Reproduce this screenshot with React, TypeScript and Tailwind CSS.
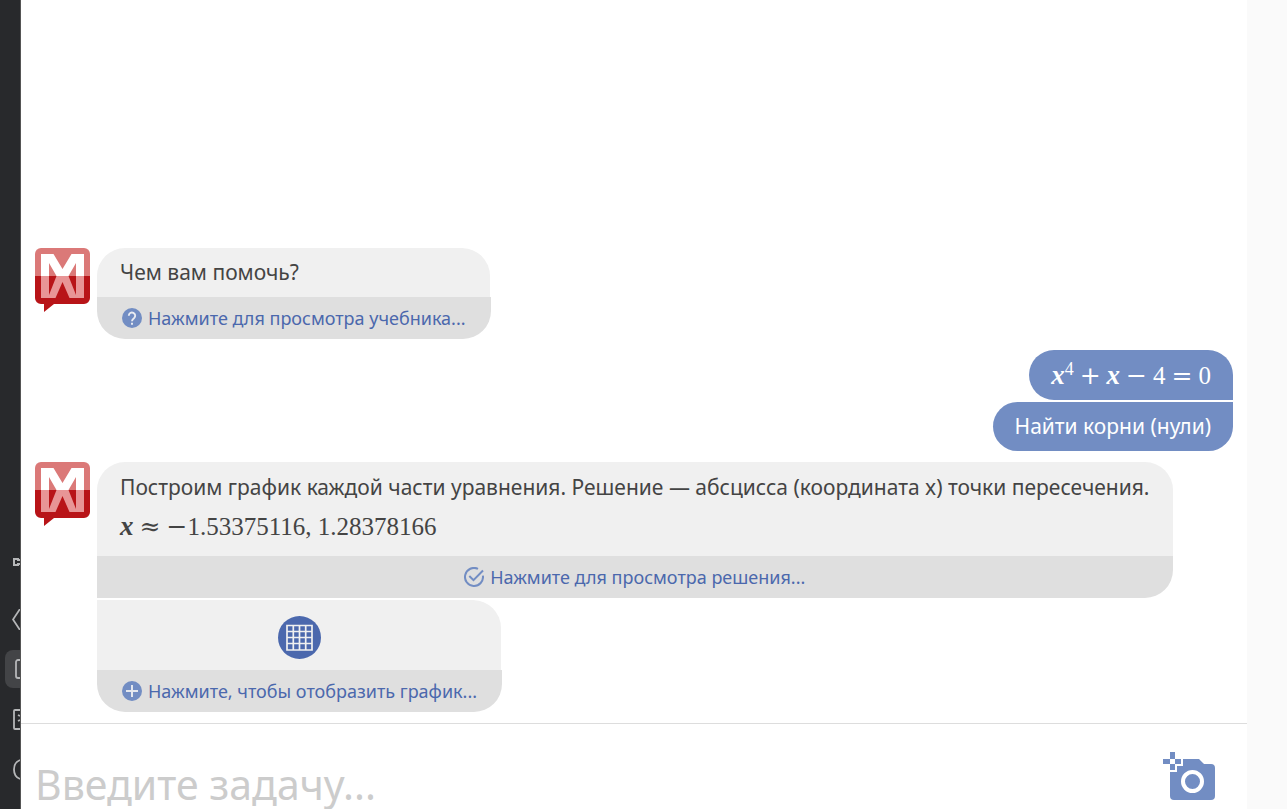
import type { ReactNode } from "react";

function MathX() {
  return <span className="text-[27px] font-bold italic">x</span>;
}

function Operator({ children }: { children: ReactNode }) {
  return <span className="font-['DejaVu_Serif',serif] text-[25px]">{children}</span>;
}

function Logo() {
  return (
    <svg className="h-16 w-[55px] shrink-0" viewBox="0 0 55 64" role="img" aria-label="Mathway">
      <path d="M0 28h55v22a6 6 0 0 1-6 6H19l-10 8v-8H6a6 6 0 0 1-6-6z" fill="#b81418" />
      <path d="M6 0h43a6 6 0 0 1 6 6v22H0V6a6 6 0 0 1 6-6z" fill="#db7978" />
      <path d="M6 28h43v22H6z" fill="#e89596" />
      <path d="M6 28V6h12.500l9 15L36.500 6H49v22h-8V15l-7.500 13h-12L14 15v13z" fill="#fff" />
      <path d="M14 28v19l7.500-19zM41 28v19l-7.500-19zM27.500 34L20.500 50h14z" fill="#b81418" />
    </svg>
  );
}

function HelpIcon() {
  return (
    <svg className="size-5 shrink-0" viewBox="0 0 20 20" aria-hidden="true">
      <circle cx="10" cy="10" r="10" fill="#728dc3" />
      <path d="M6.800 7.700a3.200 3.200 0 1 1 5.300 2.400c-1.200 1-2.100 1.500-2.100 3.100" fill="none" stroke="#e8ebf2" strokeWidth="1.900" />
      <path d="M9 14.800h2v2H9z" fill="#e8ebf2" />
    </svg>
  );
}

function CheckIcon() {
  return (
    <svg className="size-5 shrink-0" viewBox="0 0 20 20" fill="none" stroke="#728dc3" strokeWidth="2" aria-hidden="true">
      <path d="M18.900 8.600A9 9 0 1 1 14 1.900M5.300 9l4.200 4.200L19 3.500" />
    </svg>
  );
}

function PlusIcon() {
  return (
    <svg className="size-5 shrink-0" viewBox="0 0 20 20" aria-hidden="true">
      <circle cx="10" cy="10" r="10" fill="#728dc3" />
      <path d="M10 4v12M4 10h12" stroke="#e4e7ee" strokeWidth="2" />
    </svg>
  );
}

function GraphIcon() {
  return (
    <svg className="size-[43px]" viewBox="0 0 43 43" aria-hidden="true">
      <circle cx="21.500" cy="21.500" r="21.500" fill="#4b68ad" />
      <path d="M9 9.500h25v24.500H9zM15.300 9v25M21.500 9v25M27.700 9v25M9 15.500h25M9 21.500h25M9 27.500h25" fill="none" stroke="#f0f0f0" strokeWidth="1.700" />
    </svg>
  );
}

function CameraIcon() {
  return (
    <svg className="h-12 w-[52px]" viewBox="0 0 52 48" aria-hidden="true">
      <path d="M20 7h16l5 5h7a4 4 0 0 1 4 4v28a4 4 0 0 1-4 4H11a4 4 0 0 1-4-4V20h7v-6h6z" fill="#728dc3" />
      <circle cx="29.500" cy="29.500" r="9.500" fill="none" stroke="#fff" strokeWidth="4" />
      <path d="M7 0h5v7H7zM7 12h5v6H7zM0 7h7v5H0zM12 7h6v5h-6z" fill="#728dc3" />
    </svg>
  );
}

function Rail() {
  return (
    <nav aria-label="Tools" className="flex w-[21px] shrink-0 flex-col items-end justify-end overflow-hidden border-r border-[#555] bg-[#28292c] text-[#b5b6b8]">
      <button aria-label="Panel" className="mb-[43px] h-2 w-[7px]">
        <svg className="h-2 w-[7px]" viewBox="0 0 7 8" fill="none" stroke="currentColor" strokeWidth="2"><path d="M7 2H5V1H1v6h4V6h2" /></svg>
      </button>
      <button aria-label="Code" className="mb-5 h-[21px] w-2">
        <svg className="h-[21px] w-2" viewBox="0 0 8 21" fill="none" stroke="currentColor" strokeWidth="1.800"><path d="M8 0L1 10.500 8 21" /></svg>
      </button>
      <button aria-label="Device" className="mb-[21px] flex h-[38px] w-[15px] items-center justify-end rounded-l-lg bg-[#434447]">
        <svg className="h-5 w-[5px]" viewBox="0 0 5 20" fill="none" stroke="currentColor" strokeWidth="1.800"><path d="M5 1H3a2 2 0 0 0-2 2v14a2 2 0 0 0 2 2h2" /></svg>
      </button>
      <button aria-label="Terminal" className="mb-[29px] h-[21px] w-[7px]">
        <svg className="h-[21px] w-[7px]" viewBox="0 0 7 21" fill="none" stroke="currentColor" strokeWidth="1.800"><path d="M7 1H2a1 1 0 0 0-1 1v17a1 1 0 0 0 1 1h5M5 6l2 1M5 12l2-1" /></svg>
      </button>
      <button aria-label="History" className="mb-[29px] h-[21px] w-[7px]">
        <svg className="h-[21px] w-[7px]" viewBox="0 0 7 21" fill="none" stroke="currentColor" strokeWidth="1.800"><path d="M7 1C-1 4-1 17 7 20" /></svg>
      </button>
    </nav>
  );
}

function BubbleAction({ icon, children }: { icon: ReactNode; children: ReactNode }) {
  return (
    <button className="flex h-[42px] w-full items-center justify-center gap-[6px] bg-[#dfdfdf] px-[25px] text-[18px] whitespace-nowrap text-[#4b68ad]">
      {icon}
      <span>{children}</span>
    </button>
  );
}

export default function App() {
  return (
    <div className="flex h-screen overflow-hidden bg-[#fafafa] font-['Noto_Sans',sans-serif] text-[#444]">
      <Rail />
      <main className="mr-10 flex min-w-0 flex-1 flex-col bg-white">
        <section aria-label="Chat" className="flex min-h-0 flex-1 flex-col justify-end px-[14px] pb-[11px]">
          <div className="flex gap-[7px]">
            <Logo />
            <div className="overflow-hidden rounded-[28px]">
              <p className="mr-px flex h-[49px] items-center rounded-tr-[28px] bg-[#f0f0f0] px-[23px] text-[21px]">Чем вам помочь?</p>
              <BubbleAction icon={<HelpIcon />}>Нажмите для просмотра учебника...</BubbleAction>
            </div>
          </div>

          <div className="mt-[11px] mb-[11px] flex flex-col items-end gap-[2px] text-white">
            <p className="flex h-[50px] items-baseline gap-[6px] rounded-[25px] rounded-br-none bg-[#728dc3] px-[22px] font-['Liberation_Serif',serif] text-[25px] leading-[50px]">
              <span><MathX /><sup className="text-[18px]">4</sup></span>
              <Operator>+</Operator>
              <MathX />
              <Operator>−</Operator>
              <span>4</span>
              <Operator>=</Operator>
              <span>0</span>
            </p>
            <p className="flex h-[49px] items-center rounded-[25px] rounded-tr-none bg-[#728dc3] px-[22px] text-[21px]">Найти корни (нули)</p>
          </div>

          <div className="flex gap-[7px]">
            <Logo />
            <div className="flex min-w-0 flex-col items-start gap-[2px]">
              <div className="overflow-hidden rounded-[28px] rounded-bl-none">
                <div className="h-[94px] bg-[#f0f0f0] px-[23px] pt-[9px]">
                  <p className="text-[21px] leading-8 whitespace-nowrap">Построим график каждой части уравнения. Решение — абсцисса (координата x) точки пересечения.</p>
                  <p className="flex h-10 items-baseline gap-[6px] font-['Liberation_Serif',serif] text-[25px] leading-[46px]">
                    <MathX />
                    <Operator>≈</Operator>
                    <span><Operator>−</Operator>1.53375116, 1.28378166</span>
                  </p>
                </div>
                <BubbleAction icon={<CheckIcon />}>Нажмите для просмотра решения...</BubbleAction>
              </div>
              <div className="overflow-hidden rounded-[28px] rounded-tl-none">
                <div className="mr-px flex h-[70px] items-center justify-center rounded-tr-[28px] bg-[#f0f0f0] pt-1">
                  <button aria-label="График"><GraphIcon /></button>
                </div>
                <BubbleAction icon={<PlusIcon />}>Нажмите, чтобы отобразить график...</BubbleAction>
              </div>
            </div>
          </div>
        </section>

        <form className="flex h-[86px] shrink-0 items-start justify-between overflow-hidden border-t border-[#ddd] pr-8 pl-[14px]">
          <input aria-label="Введите задачу" placeholder="Введите задачу..." className="mt-7 h-16 min-w-0 flex-1 text-[41px] outline-none placeholder:text-[#ccc]" />
          <button type="button" aria-label="Камера" className="mt-7"><CameraIcon /></button>
        </form>
      </main>
    </div>
  );
}
